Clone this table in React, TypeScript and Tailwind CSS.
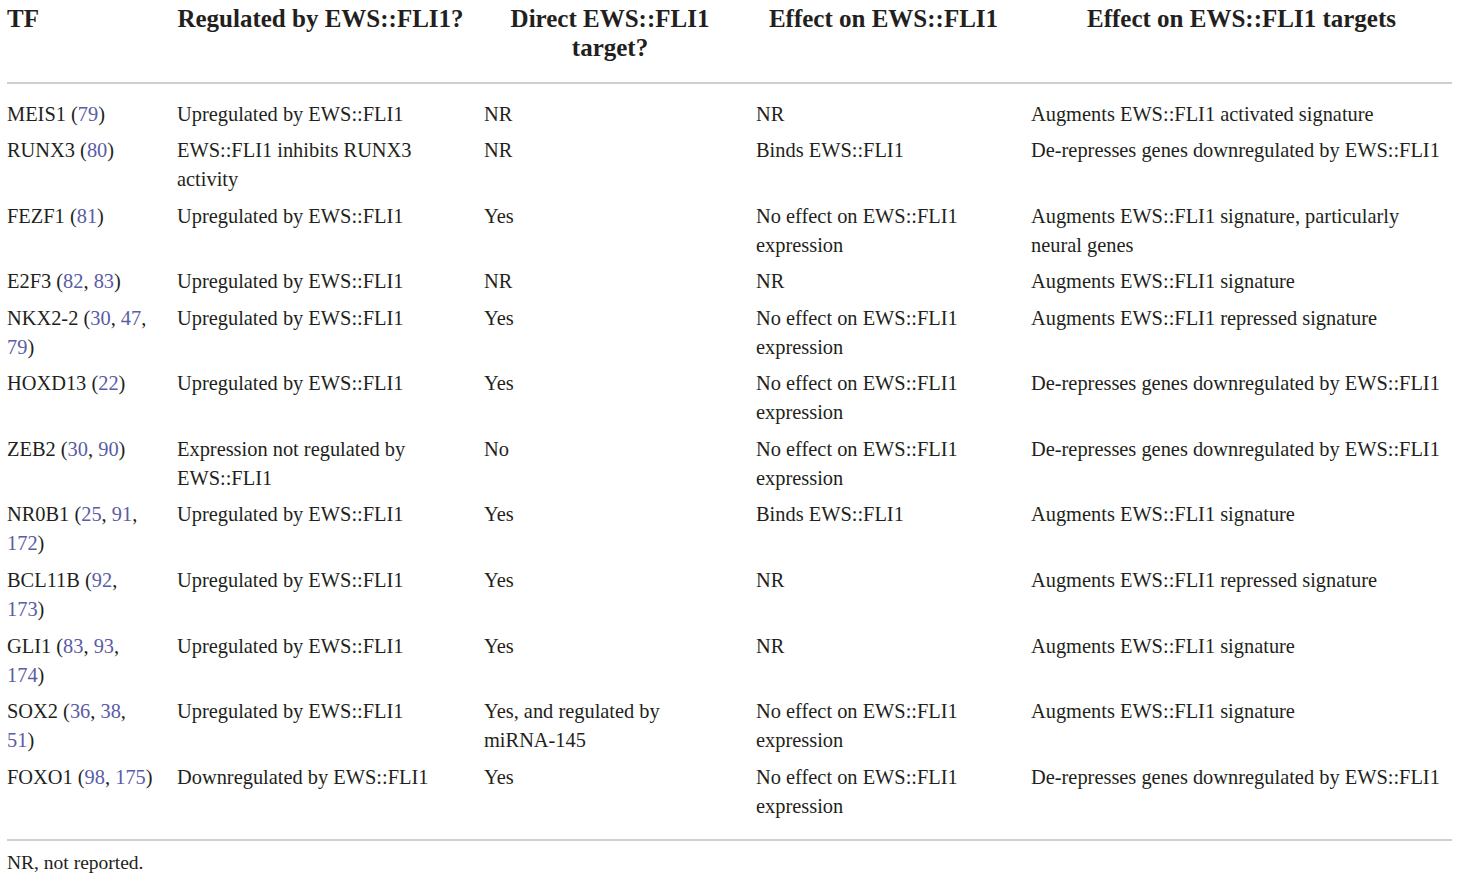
import React from 'react';

type Cell = React.ReactNode;

interface Row {
  tf: Cell;
  regulated: Cell;
  direct: Cell;
  effect: Cell;
  targets: Cell;
}

const Ref: React.FC<{ n: number }> = ({ n }) => <span className="text-[#5b5ca6]">{n}</span>;

const noEffect = (
  <>
    No effect on EWS::FLI1
    <br />
    expression
  </>
);
const up = 'Upregulated by EWS::FLI1';
const derepress = 'De-represses genes downregulated by EWS::FLI1';

const rows: Row[] = [
  {
    tf: <>MEIS1 (<Ref n={79} />)</>,
    regulated: up,
    direct: 'NR',
    effect: 'NR',
    targets: 'Augments EWS::FLI1 activated signature',
  },
  {
    tf: <>RUNX3 (<Ref n={80} />)</>,
    regulated: <>EWS::FLI1 inhibits RUNX3<br />activity</>,
    direct: 'NR',
    effect: 'Binds EWS::FLI1',
    targets: derepress,
  },
  {
    tf: <>FEZF1 (<Ref n={81} />)</>,
    regulated: up,
    direct: 'Yes',
    effect: noEffect,
    targets: <>Augments EWS::FLI1 signature, particularly<br />neural genes</>,
  },
  {
    tf: <>E2F3 (<Ref n={82} />, <Ref n={83} />)</>,
    regulated: up,
    direct: 'NR',
    effect: 'NR',
    targets: 'Augments EWS::FLI1 signature',
  },
  {
    tf: <>NKX2-2 (<Ref n={30} />, <Ref n={47} />,<br /><Ref n={79} />)</>,
    regulated: up,
    direct: 'Yes',
    effect: noEffect,
    targets: 'Augments EWS::FLI1 repressed signature',
  },
  {
    tf: <>HOXD13 (<Ref n={22} />)</>,
    regulated: up,
    direct: 'Yes',
    effect: noEffect,
    targets: derepress,
  },
  {
    tf: <>ZEB2 (<Ref n={30} />, <Ref n={90} />)</>,
    regulated: <>Expression not regulated by<br />EWS::FLI1</>,
    direct: 'No',
    effect: noEffect,
    targets: derepress,
  },
  {
    tf: <>NR0B1 (<Ref n={25} />, <Ref n={91} />,<br /><Ref n={172} />)</>,
    regulated: up,
    direct: 'Yes',
    effect: 'Binds EWS::FLI1',
    targets: 'Augments EWS::FLI1 signature',
  },
  {
    tf: <>BCL11B (<Ref n={92} />,<br /><Ref n={173} />)</>,
    regulated: up,
    direct: 'Yes',
    effect: 'NR',
    targets: 'Augments EWS::FLI1 repressed signature',
  },
  {
    tf: <>GLI1 (<Ref n={83} />, <Ref n={93} />,<br /><Ref n={174} />)</>,
    regulated: up,
    direct: 'Yes',
    effect: 'NR',
    targets: 'Augments EWS::FLI1 signature',
  },
  {
    tf: <>SOX2 (<Ref n={36} />, <Ref n={38} />,<br /><Ref n={51} />)</>,
    regulated: up,
    direct: <>Yes, and regulated by<br />miRNA-145</>,
    effect: noEffect,
    targets: 'Augments EWS::FLI1 signature',
  },
  {
    tf: <>FOXO1 (<Ref n={98} />, <Ref n={175} />)</>,
    regulated: 'Downregulated by EWS::FLI1',
    direct: 'Yes',
    effect: noEffect,
    targets: derepress,
  },
];

const cols = 'grid grid-cols-[170px_307px_272px_275px_421px]';

const App: React.FC = () => {
  return (
    <div className="w-[1460px] h-[881px] bg-white overflow-hidden pl-[7px] text-[#231f20] font-['Liberation_Serif',serif]">
      <div className="w-[1445px]">
        {/* Header */}
        <div className={`${cols} pt-[4px] pb-[20px] text-[25px] leading-[29px] font-bold`}>
          <div>TF</div>
          <div className="text-center pr-5">Regulated by EWS::FLI1?</div>
          <div className="text-center pr-5">Direct EWS::FLI1<br />target?</div>
          <div className="text-center pr-5">Effect on EWS::FLI1</div>
          <div className="text-center">Effect on EWS::FLI1 targets</div>
        </div>
        <div className="h-[2px] bg-[#cfcfcf]" />

        {/* Body */}
        <div className="pt-[12px] pb-[14px] text-[20.4px] leading-[29.1px] whitespace-nowrap">
          {rows.map((r, i) => (
            <div key={i} className={`${cols} pt-[3.5px] pb-[3.9px]`}>
              <div>{r.tf}</div>
              <div>{r.regulated}</div>
              <div>{r.direct}</div>
              <div>{r.effect}</div>
              <div>{r.targets}</div>
            </div>
          ))}
        </div>
        <div className="h-[2px] bg-[#cfcfcf]" />

        {/* Footnote */}
        <div className="pt-[8px] text-[19.5px] leading-[28px]">NR, not reported.</div>
      </div>
    </div>
  );
};

export default App;
